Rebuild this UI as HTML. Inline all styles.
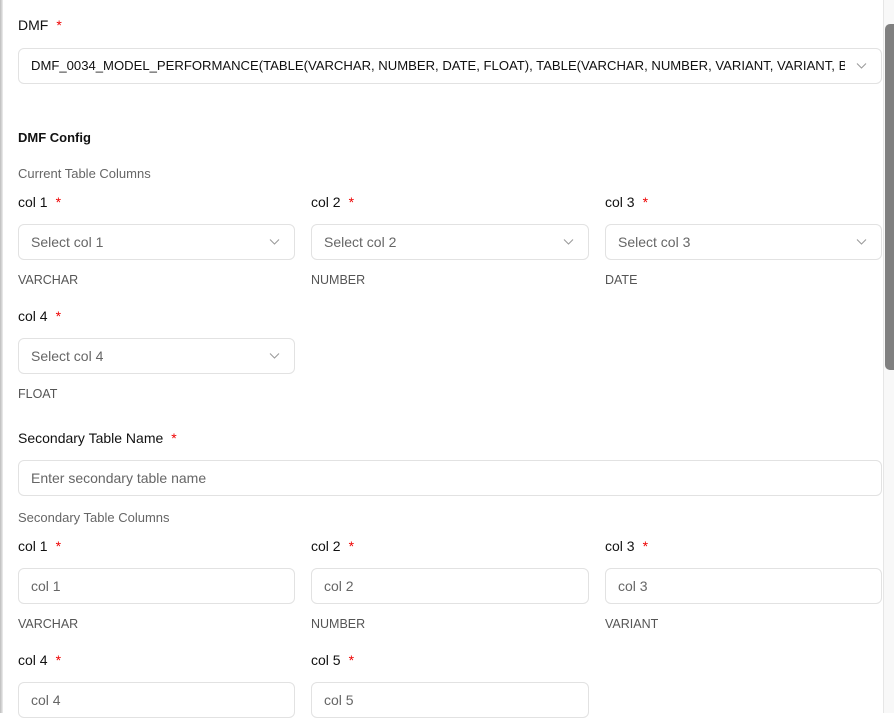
<!DOCTYPE html>
<html><head><style>
*{box-sizing:border-box}
body{margin:0;width:894px;height:713px;overflow:hidden;background:#fff;font-family:"Liberation Sans",sans-serif;font-size:14px;color:#111;position:relative}
.edge{position:absolute;left:0;top:0;width:3px;height:713px;background:linear-gradient(90deg,#bbb,#eee)}
.sb{position:absolute;left:883px;top:0;width:11px;height:713px;background:#f8f8f8;border-left:1px solid #e6e6e6}
.thumb{position:absolute;left:885px;top:24px;width:9px;height:346px;background:#808080;border-radius:5px 0 0 5px}
.a{position:absolute}
.lbl{font-size:14px;color:#111}
.req{color:#e00;margin-left:8px}
.box{position:absolute;height:36px;border:1px solid #e2e2e2;border-radius:6px;background:#fff;padding:0 12px;line-height:34px;color:#666;font-size:14px;white-space:nowrap;overflow:hidden}
.chev{position:absolute;right:14px;top:13px;width:11px;height:8px}
.type{font-size:12.5px;color:#555}
.sub{font-size:13px;color:#666}
</style></head><body>
<div class="edge"></div>
<div class="a lbl" style="left:18px;top:17px">DMF<span class="req">*</span></div>
<div class="box" style="left:18px;top:48px;width:864px;color:#111"><span style="display:inline-block;width:814px;overflow:hidden;vertical-align:top;font-size:13.1px">DMF_0034_MODEL_PERFORMANCE(TABLE(VARCHAR, NUMBER, DATE, FLOAT), TABLE(VARCHAR, NUMBER, VARIANT, VARIANT, BOOLEAN))</span><svg class="chev" viewBox="0 0 11 7"><path d="M1 1l4.5 4.5 4.5-4.5" stroke="#999" fill="none"/></svg></div>
<div class="a" style="left:18px;top:130px;font-weight:bold;font-size:13px">DMF Config</div>
<div class="a sub" style="left:18px;top:166px">Current Table Columns</div>

<div class="a lbl" style="left:18px;top:194px">col 1<span class="req">*</span></div>
<div class="a lbl" style="left:311px;top:194px">col 2<span class="req">*</span></div>
<div class="a lbl" style="left:605px;top:194px">col 3<span class="req">*</span></div>
<div class="box" style="left:18px;top:224px;width:277px">Select col 1<svg class="chev" viewBox="0 0 11 7"><path d="M1 1l4.5 4.5 4.5-4.5" stroke="#999" fill="none"/></svg></div>
<div class="box" style="left:311px;top:224px;width:278px">Select col 2<svg class="chev" viewBox="0 0 11 7"><path d="M1 1l4.5 4.5 4.5-4.5" stroke="#999" fill="none"/></svg></div>
<div class="box" style="left:605px;top:224px;width:277px">Select col 3<svg class="chev" viewBox="0 0 11 7"><path d="M1 1l4.5 4.5 4.5-4.5" stroke="#999" fill="none"/></svg></div>
<div class="a type" style="left:18px;top:273px">VARCHAR</div>
<div class="a type" style="left:311px;top:273px">NUMBER</div>
<div class="a type" style="left:605px;top:273px">DATE</div>

<div class="a lbl" style="left:18px;top:308px">col 4<span class="req">*</span></div>
<div class="box" style="left:18px;top:338px;width:277px">Select col 4<svg class="chev" viewBox="0 0 11 7"><path d="M1 1l4.5 4.5 4.5-4.5" stroke="#999" fill="none"/></svg></div>
<div class="a type" style="left:18px;top:387px">FLOAT</div>

<div class="a lbl" style="left:18px;top:430px">Secondary Table Name<span class="req">*</span></div>
<div class="box" style="left:18px;top:460px;width:864px">Enter secondary table name</div>
<div class="a sub" style="left:18px;top:510px">Secondary Table Columns</div>

<div class="a lbl" style="left:18px;top:538px">col 1<span class="req">*</span></div>
<div class="a lbl" style="left:311px;top:538px">col 2<span class="req">*</span></div>
<div class="a lbl" style="left:605px;top:538px">col 3<span class="req">*</span></div>
<div class="box" style="left:18px;top:568px;width:277px">col 1</div>
<div class="box" style="left:311px;top:568px;width:278px">col 2</div>
<div class="box" style="left:605px;top:568px;width:277px">col 3</div>
<div class="a type" style="left:18px;top:617px">VARCHAR</div>
<div class="a type" style="left:311px;top:617px">NUMBER</div>
<div class="a type" style="left:605px;top:617px">VARIANT</div>

<div class="a lbl" style="left:18px;top:652px">col 4<span class="req">*</span></div>
<div class="a lbl" style="left:311px;top:652px">col 5<span class="req">*</span></div>
<div class="box" style="left:18px;top:682px;width:277px">col 4</div>
<div class="box" style="left:311px;top:682px;width:278px">col 5</div>

<div class="sb"></div><div class="thumb"></div>
</body></html>
